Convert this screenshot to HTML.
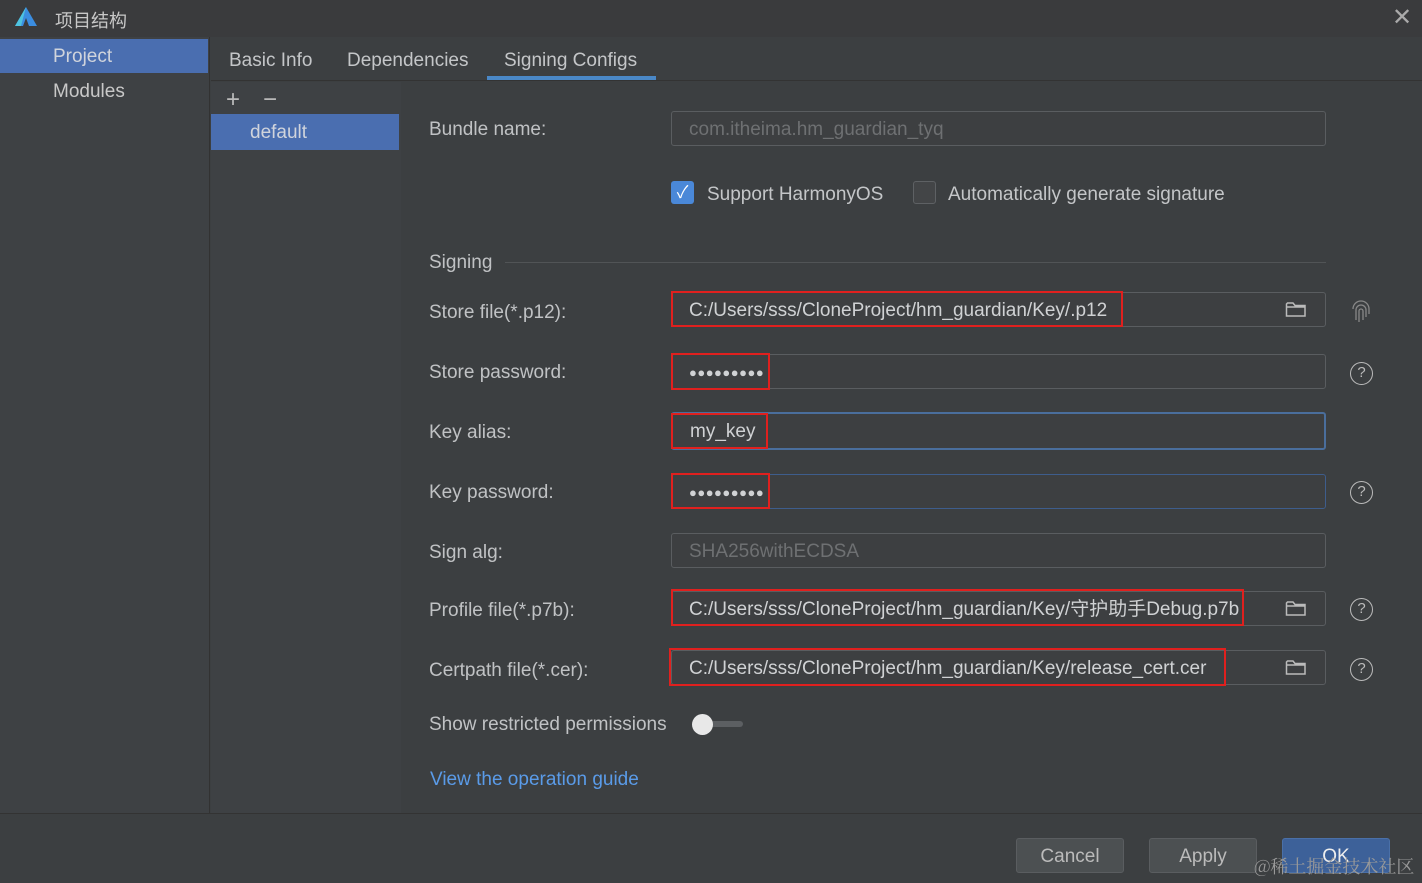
<!DOCTYPE html><html><head><meta charset="utf-8"><style>
*{margin:0;padding:0;box-sizing:border-box}
body{width:1422px;height:883px;background:#3c3f41;font-family:"Liberation Sans","Noto Sans CJK SC",sans-serif;color:#c4c6c8;position:relative;overflow:hidden;font-size:19px}
.a{position:absolute}
.lbl{position:absolute;left:429px;font-size:19px;color:#c0c2c4}
.fld{position:absolute;left:671px;width:655px;height:35px;border:1px solid #5a5d60;border-radius:3px;background:#3d3f41;padding-left:17px;line-height:35px;color:#d0d2d4;font-size:19px}
.pw{font-size:13px;letter-spacing:0.5px;font-weight:bold}
.red{position:absolute;border:2px solid #e0201e}
.q{position:absolute;left:1350px;width:23px;height:23px;border:1.5px solid #bbb;border-radius:50%;font-size:15px;text-align:center;line-height:20px;color:#bbb}
.btn{position:absolute;top:838px;width:108px;height:35px;border:1px solid #5a5d60;border-radius:3px;background:#4c5052;text-align:center;line-height:35px;font-size:19px;color:#bbb}
.fold{position:absolute;left:1285px}
</style></head><body>
<div class="a" style="left:0;top:0;width:1422px;height:37px;background:#3a3b3d"></div>
<svg class="a" style="left:13px;top:6px" width="26" height="22"><path d="M13 1 L2 20 L10 20 L13 12 L16 20 L24 20 Z" fill="#3b8de0"/><path d="M13 1 L2 20 L8 20 Z" fill="#4ec3e0"/></svg>
<div class="a" style="left:55px;top:7px;font-size:18px;color:#c8c8c8">项目结构</div>
<div class="a" style="left:1392px;top:3px;font-size:24px;color:#aaa">✕</div>
<div class="a" style="left:0;top:37px;width:210px;height:776px;background:#3e4144;border-right:1px solid #323232"></div>
<div class="a" style="left:0;top:39px;width:208px;height:34px;background:#4a6eb0"></div>
<div class="a" style="left:53px;top:46px;color:#d0d4dc">Project</div>
<div class="a" style="left:53px;top:81px;color:#c8c8c8">Modules</div>
<div class="a" style="left:211px;top:37px;width:1211px;height:44px;background:#3c3f41;border-bottom:1px solid #333"></div>
<div class="a" style="left:229px;top:50px">Basic Info</div>
<div class="a" style="left:347px;top:50px">Dependencies</div>
<div class="a" style="left:504px;top:50px">Signing Configs</div>
<div class="a" style="left:487px;top:76px;width:169px;height:4px;background:#4a88c7"></div>
<div class="a" style="left:211px;top:82px;width:190px;height:731px;background:#3e4144"></div>
<div class="a" style="left:226px;top:86px;font-size:24px;color:#bbb">+</div>
<div class="a" style="left:263px;top:86px;font-size:24px;color:#bbb">−</div>
<div class="a" style="left:211px;top:114px;width:188px;height:36px;background:#4a6eb0"></div>
<div class="a" style="left:250px;top:122px;color:#d0d4dc">default</div>

<div class="lbl" style="top:119px">Bundle name:</div>
<div class="fld" style="top:111px;color:#6e7072">com.itheima.hm_guardian_tyq</div>
<div class="a" style="left:671px;top:181px;width:23px;height:23px;background:#4a88d8;border-radius:3px;color:#fff;text-align:center;line-height:23px;font-size:17px">✓</div>
<div class="a" style="left:707px;top:184px">Support HarmonyOS</div>
<div class="a" style="left:913px;top:181px;width:23px;height:23px;border:1px solid #5e6164;border-radius:3px;background:#434547"></div>
<div class="a" style="left:948px;top:184px">Automatically generate signature</div>
<div class="lbl" style="top:252px">Signing</div>
<div class="a" style="left:505px;top:262px;width:821px;height:1px;background:#515456"></div>

<div class="lbl" style="top:302px">Store file(*.p12):</div>
<div class="fld" style="top:292px">C:/Users/sss/CloneProject/hm_guardian/Key/.p12</div>
<svg class="fold" style="top:301px" width="22" height="17"><path d="M1.5 3 V15 H20 V4.5 H10 L8 2 H2.5 Z M1.5 6 H20" fill="none" stroke="#bbb" stroke-width="1.5"/></svg>
<div class="red" style="left:671px;top:291px;width:452px;height:36px"></div>
<svg class="a" style="left:1350px;top:300px" width="22" height="24"><g fill="none" stroke="#888" stroke-width="1.3"><path d="M3 9 A8 8 0 0 1 19 9 V14"/><path d="M6 20 V10 A5 5 0 0 1 16 10 V17"/><path d="M9 22 V11 A2 2 0 0 1 13 11 V20"/></g></svg>

<div class="lbl" style="top:362px">Store password:</div>
<div class="fld pw" style="top:354px">●●●●●●●●●</div>
<div class="red" style="left:671px;top:353px;width:99px;height:37px"></div>
<div class="q" style="top:362px">?</div>

<div class="lbl" style="top:422px">Key alias:</div>
<div class="fld" style="top:412px;border:2px solid #4a6e9c;height:38px;line-height:36px">my_key</div>
<div class="red" style="left:671px;top:413px;width:97px;height:36px"></div>

<div class="lbl" style="top:482px">Key password:</div>
<div class="fld pw" style="top:474px;border-color:#3e5d8c">●●●●●●●●●</div>
<div class="red" style="left:671px;top:473px;width:99px;height:36px"></div>
<div class="q" style="top:481px">?</div>

<div class="lbl" style="top:542px">Sign alg:</div>
<div class="fld" style="top:533px;color:#6e7072">SHA256withECDSA</div>

<div class="lbl" style="top:600px">Profile file(*.p7b):</div>
<div class="fld" style="top:591px">C:/Users/sss/CloneProject/hm_guardian/Key/守护助手Debug.p7b</div>
<svg class="fold" style="top:600px" width="22" height="17"><path d="M1.5 3 V15 H20 V4.5 H10 L8 2 H2.5 Z M1.5 6 H20" fill="none" stroke="#bbb" stroke-width="1.5"/></svg>
<div class="red" style="left:671px;top:589px;width:573px;height:37px"></div>
<div class="q" style="top:598px">?</div>

<div class="lbl" style="top:660px">Certpath file(*.cer):</div>
<div class="fld" style="top:650px">C:/Users/sss/CloneProject/hm_guardian/Key/release_cert.cer</div>
<svg class="fold" style="top:659px" width="22" height="17"><path d="M1.5 3 V15 H20 V4.5 H10 L8 2 H2.5 Z M1.5 6 H20" fill="none" stroke="#bbb" stroke-width="1.5"/></svg>
<div class="red" style="left:669px;top:648px;width:557px;height:38px"></div>
<div class="q" style="top:658px">?</div>

<div class="lbl" style="top:714px">Show restricted permissions</div>
<div class="a" style="left:693px;top:721px;width:50px;height:6px;background:#5c5f62;border-radius:3px"></div>
<div class="a" style="left:692px;top:714px;width:21px;height:21px;background:#e8e8e8;border-radius:50%"></div>
<div class="a" style="left:430px;top:769px;color:#5a9be8">View the operation guide</div>

<div class="a" style="left:0;top:813px;width:1422px;height:70px;background:#3c3f41;border-top:1px solid #333"></div>
<div class="btn" style="left:1016px">Cancel</div>
<div class="btn" style="left:1149px">Apply</div>
<div class="btn" style="left:1282px;background:#3d6199;border-color:#4a70a8;color:#eee">OK</div>
<div class="a" style="left:1254px;top:853px;font-size:18px;color:#999;font-family:'Noto Serif CJK SC',serif">@稀土掘金技术社区</div>
</body></html>
